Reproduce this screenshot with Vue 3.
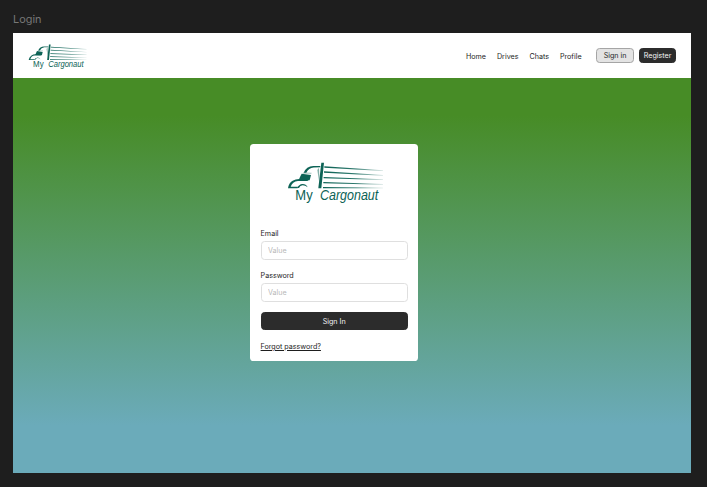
<script setup>
import { h } from 'vue'

const links = ['Home', 'Drives', 'Chats', 'Profile']
const fields = ['Email', 'Password']
const speedLines = [
  'M252 93L428 105L428 107L252 97Z',
  'M251 108L428 119L428 121L251 112Z',
  'M250 125L428 132L428 134L250 129Z',
  'M249 140L428 146L428 148L249 144Z',
  'M248 155L428 157L428 159L248 159Z',
]

const CargoLogo = (props) =>
  h('svg', { viewBox: '140 80 295 125', role: 'img', 'aria-label': 'My Cargonaut' }, [
    h('defs', [
      h('linearGradient', { id: props.gradient, gradientUnits: 'userSpaceOnUse', x1: 250, y1: 0, x2: 430, y2: 0 }, [
        h('stop', { offset: '0', 'stop-color': '#0d6356' }),
        h('stop', { offset: '.55', 'stop-color': '#0d6356', 'stop-opacity': '.85' }),
        h('stop', { offset: '1', 'stop-color': '#0d6356', 'stop-opacity': '.15' }),
      ]),
    ]),
    ...speedLines.map((d) => h('path', { d, fill: `url(#${props.gradient})` })),
    h('g', { fill: '#0d6356' }, [
      h('path', { d: 'M243 82L251 82L243 159L234 159Z' }),
      h('path', { d: 'M231 104L236 97L238 150Z', 'fill-opacity': '.5' }),
      h('path', { d: 'M184 115L212 119L208 135L175 134L179 125Z' }),
      h('path', { d: 'M190 112Q198 93 219 92L240 92L240 96L220 96.5Q205 98 198 112Z' }),
      h('path', { d: 'M190 111L214 112L213 116L187 115Z', 'fill-opacity': '.3' }),
      h('path', { d: 'M143 159Q145 143 157 136Q165 131 177 131L205 134L201 137L173 137Q156 139 151 154.5L173 154.5L172 159Z' }),
      h('path', { d: 'M171 158Q175 147 187 146Q197 146 202 156Q195 149.5 187 149.5Q179 149.5 176 158Z' }),
      h('text', { x: 165, y: 194.5, 'font-size': 42, textLength: 52, lengthAdjust: 'spacingAndGlyphs' }, 'My'),
      h('text', { x: 239, y: 194.5, 'font-size': 42, 'font-style': 'italic', textLength: 175, lengthAdjust: 'spacingAndGlyphs' }, 'Cargonaut'),
    ]),
  ])
CargoLogo.props = ['gradient']
</script>

<template>
  <main class="canvas">
    <div class="frame-name">Login</div>
    <section class="frame">
      <header class="header">
        <CargoLogo class="logo brand" gradient="fade-header" />
        <nav class="nav">
          <a v-for="link in links" :key="link">{{ link }}</a>
        </nav>
        <div class="actions">
          <button class="btn light">Sign in</button>
          <button class="btn">Register</button>
        </div>
      </header>
      <div class="hero">
        <form class="card" @submit.prevent>
          <CargoLogo class="logo card-logo" gradient="fade-card" />
          <label v-for="field in fields" :key="field" class="field">
            <span>{{ field }}</span>
            <input :type="field === 'Email' ? 'email' : 'password'" placeholder="Value" />
          </label>
          <button class="btn submit">Sign In</button>
          <a class="forgot">Forgot password?</a>
        </form>
      </div>
    </section>
  </main>
</template>

<style>
body {
  margin: 0;
  background: #1e1e1e;
}
</style>

<style scoped>
.canvas {
  box-sizing: border-box;
  height: 487px;
  padding: 12px 16.3px 14px 12.6px;
  overflow: hidden;
  background: #1e1e1e;
  color: #1e1e1e;
  font: 7.15px/10px Inter, sans-serif;
}
.frame-name {
  height: 20.7px;
  padding-left: 0.5px;
  color: #777;
  font-size: 10.9px;
  line-height: 15px;
}
.frame {
  display: flex;
  flex-direction: column;
  height: 440.2px;
}
.header {
  box-sizing: border-box;
  display: flex;
  align-items: center;
  height: 45.7px;
  padding: 0 14.4px 0 15.4px;
  background: #fff;
}
.logo {
  display: block;
  flex: none;
  overflow: visible;
  font-family: "Liberation Sans", Arial, sans-serif;
}
.brand {
  width: 60px;
  height: 25.4px;
  margin-top: 2.8px;
}
.nav {
  display: flex;
  gap: 11px;
  margin-left: auto;
  padding-top: 2px;
}
.actions {
  display: flex;
  gap: 5px;
  margin-left: 14.7px;
}
.btn {
  box-sizing: border-box;
  width: 37.5px;
  height: 14.7px;
  padding: 1.8px 0 0;
  border: 1px solid #2c2c2c;
  border-radius: 3.6px;
  background: #2c2c2c;
  color: #f5f5f5;
  font: inherit;
  text-align: center;
}
.light {
  border-color: #a5a5a5;
  background: #e3e3e3;
  color: #1e1e1e;
}
.hero {
  flex: 1;
  padding: 65.6px 0 0 237.4px;
  background: linear-gradient(180deg, #478c26 9.5%, #6babba 88%);
}
.card {
  box-sizing: border-box;
  display: flex;
  flex-direction: column;
  width: 168.4px;
  height: 217.4px;
  padding: 18.3px 10.6px 9px;
  border-radius: 3.6px;
  background: #fff;
}
.card-logo {
  width: 98.3px;
  height: 41.7px;
  margin: 0 0 24.6px 26.1px;
}
.field {
  display: flex;
  flex-direction: column;
  gap: 2.3px;
  margin-bottom: 11px;
}
.field input {
  box-sizing: border-box;
  width: 100%;
  height: 18.7px;
  padding: 0 6.3px;
  border: 1px solid #dfdfdf;
  border-radius: 3.6px;
  outline: 0;
  background: #fff;
  font: inherit;
}
.field input::placeholder {
  color: #b8b8b8;
  opacity: 1;
}
.submit {
  flex: none;
  width: 100%;
  height: 18.3px;
  margin-top: -0.7px;
}
.forgot {
  align-self: flex-start;
  margin-top: 11.8px;
  text-decoration: underline;
}
</style>
